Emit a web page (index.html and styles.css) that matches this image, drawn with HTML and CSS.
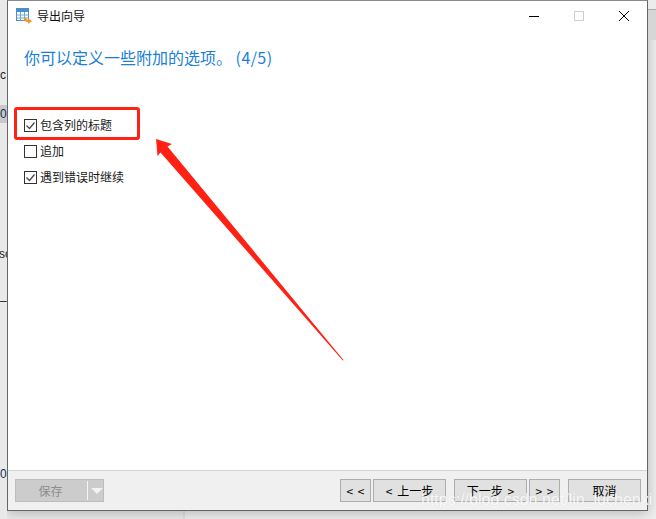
FILE: index.html
```html
<!DOCTYPE html>
<html lang="en">

<head>
    <meta charset="UTF-8" />
    <title>导出向导</title>
    <link rel="stylesheet" href="styles.css">
</head>

<body>
    <!-- Bits of the app behind the dialog -->
    <div class="behind-left">
        <span class="behind-text behind-c">c</span>
        <span class="behind-row">0</span>
        <span class="behind-text behind-sc">sc</span>
        <span class="behind-text behind-s">_s</span>
        <span class="behind-text behind-zero">0</span>
    </div>

    <div class="window">
        <div class="titlebar">
            <svg class="app-icon" width="16" height="16" viewBox="0 0 16 16">
                <rect x="0.5" y="0.5" width="12" height="12" fill="#fff" stroke="#4a8fc9" />
                <rect x="0" y="0" width="13" height="4" fill="#4a8fc9" />
                <path d="M4.500 4v8.500M8.500 4v8.500M0.500 7h12M0.500 10h12" stroke="#6fa6d6" fill="none" />
                <path d="M8.500 10c1 2.500 2.500 3.200 4.500 3" stroke="#f39a1f" stroke-width="2.200" fill="none" />
                <path d="M12 10l4 3.300-3.700 2.700z" fill="#f39a1f" />
            </svg>
            <span class="title-text">导出向导</span>
            <div class="window-controls">
                <svg width="10" height="10" viewBox="0 0 10 10">
                    <path d="M0 5.500h10" stroke="#000" fill="none" />
                </svg>
                <svg width="10" height="10" viewBox="0 0 10 10">
                    <rect x="0.500" y="0.500" width="9" height="9" stroke="#ccc" fill="none" />
                </svg>
                <svg width="10" height="10" viewBox="0 0 10 10">
                    <path d="M0 0l10 10M10 0L0 10" stroke="#000" fill="none" />
                </svg>
            </div>
        </div>

        <div class="content">
            <h2 class="heading">你可以定义一些附加的选项。 <span class="step">(4/5)</span></h2>
            <div class="options">
                <label class="option"><span class="box checked"><svg width="11" height="11" viewBox="0 0 11 11"><path d="M1.500 5.500l3 3 5-6" stroke="#444" stroke-width="1.200" fill="none" /></svg></span>包含列的标题</label>
                <label class="option"><span class="box"></span>追加</label>
                <label class="option"><span class="box checked"><svg width="11" height="11" viewBox="0 0 11 11"><path d="M1.500 5.500l3 3 5-6" stroke="#444" stroke-width="1.200" fill="none" /></svg></span>遇到错误时继续</label>
            </div>
        </div>

        <div class="footer">
            <div class="save-btn">
                <span class="save-label">保存</span>
                <span class="save-arrow"></span>
            </div>
            <div class="nav-buttons">
                <button class="btn btn-small">&lt; &lt;</button>
                <button class="btn">&lt; 上一步</button>
                <button class="btn btn-next">下一步 &gt;</button>
                <button class="btn btn-small">&gt; &gt;</button>
                <button class="btn btn-cancel">取消</button>
            </div>
        </div>
    </div>

    <div class="behind-right">
        <div class="behind-right-top"></div>
        <div class="behind-right-band"></div>
    </div>

    <!-- Annotations pasted on the screenshot -->
    <div class="mark-box"></div>
    <svg class="mark-arrow" width="656" height="519" viewBox="0 0 656 519">
        <path d="M156 139L172 144L167.500 146.500L343.500 360L342.800 360.500L160.500 152.500L157.500 156Z" fill="#ff2113" />
    </svg>
    <div class="watermark">https://blog.csdn.net/lin_luchenxi</div>
</body>

</html>
```

FILE: styles.css
```css
body {
    margin: 0;
    width: 656px;
    height: 519px;
    overflow: hidden;
    position: relative;
    display: flex;
    align-items: flex-start;
    background: linear-gradient(90deg, #ebebeb 0, #ebebeb 183px, #e0e0e0 183px, #e0e0e0 185px, #efefef 185px);
    font-family: "Noto Sans CJK SC", "Liberation Sans", sans-serif;
    font-size: 12px;
    color: #000;
}

.behind-left {
    width: 7px;
    height: 519px;
    flex-shrink: 0;
    position: relative;
    overflow: hidden;
    background: #e9e9e9;
}

.behind-text,
.behind-row {
    position: absolute;
    left: 0;
    font-family: "Liberation Sans", sans-serif;
    font-size: 12px;
    line-height: 14px;
    color: #222;
}

.behind-c {
    top: 68px;
}

.behind-row {
    top: 105px;
    width: 7px;
    height: 18px;
    line-height: 18px;
    background: #c9c9c9;
    color: #0b2f52;
}

.behind-sc {
    top: 247px;
    left: -1px;
}

.behind-s {
    top: 288px;
}

.behind-zero {
    top: 467px;
    color: #0b2f52;
}

.behind-right {
    width: 8px;
    flex-shrink: 0;
}

.behind-right-top {
    height: 9px;
    border-bottom: 1px solid #ababab;
    background: #ececec;
}

.behind-right-band {
    height: 30px;
    background: #d6d6d6;
}

.window {
    width: 641px;
    height: 511px;
    box-sizing: border-box;
    flex-shrink: 0;
    display: flex;
    flex-direction: column;
    background: #fff;
    border: 1px solid #666;
    border-top: 1px solid #8a8a8a;
    box-shadow: 0 2px 12px rgba(0, 0, 0, 0.25);
}

.titlebar {
    height: 29px;
    display: flex;
    align-items: center;
    padding: 0 0 0 8px;
    flex-shrink: 0;
}

.app-icon {
    margin-right: 5px;
}

.title-text {
    line-height: 16px;
    color: #111;
}

.window-controls {
    margin-left: auto;
    display: flex;
    gap: 35px;
    padding-right: 18px;
}

.content {
    flex: 1;
    padding: 0 16px;
}

.heading {
    margin: 0;
    padding-top: 16px;
    font-size: 16px;
    font-weight: normal;
    line-height: 22px;
    color: #1a7fd6;
}

.step {
    letter-spacing: 0.400px;
}

.options {
    margin-top: 48px;
    display: flex;
    flex-direction: column;
    gap: 8px;
}

.option {
    display: flex;
    align-items: center;
    height: 18px;
    line-height: 18px;
    color: #1a1a1a;
}

.box {
    width: 11px;
    height: 11px;
    margin-right: 3px;
    border: 1px solid #333;
    background: #fff;
    display: flex;
}

.footer {
    height: 40px;
    flex-shrink: 0;
    box-sizing: border-box;
    border-top: 1px solid #d3d3d3;
    background: #f0f0f0;
    padding: 8px 6px 0 7px;
    display: flex;
    justify-content: space-between;
    align-items: flex-start;
}

.save-btn {
    width: 89px;
    height: 23px;
    box-sizing: border-box;
    border: 1px solid #bdbdbd;
    background: #cccccc;
    display: flex;
    align-items: center;
}

.save-label {
    width: 72px;
    padding-right: 2px;
    box-sizing: border-box;
    text-align: center;
    color: #8c8c8c;
    border-right: 1px solid #f4f4f4;
    height: 19px;
    line-height: 19px;
}

.save-arrow {
    width: 0;
    height: 0;
    margin-left: 3px;
    border-left: 6px solid transparent;
    border-right: 6px solid transparent;
    border-top: 6px solid #f2f2f2;
}

.nav-buttons {
    display: flex;
}

.btn {
    width: 73px;
    height: 23px;
    box-sizing: border-box;
    padding: 0;
    margin-left: 2px;
    border: 1px solid #adadad;
    background: #e1e1e1;
    font-family: inherit;
    font-size: 12px;
    line-height: 19px;
    word-spacing: 2px;
    color: #000;
}

.btn-small {
    width: 31px;
}

.btn-next,
.btn-cancel {
    margin-left: 8px;
}

.mark-box {
    position: absolute;
    left: 14px;
    top: 107px;
    width: 120px;
    height: 27px;
    border: 3px solid #ff2113;
    border-radius: 3px;
}

.mark-arrow {
    position: absolute;
    left: 0;
    top: 0;
}

.watermark {
    position: absolute;
    left: 421px;
    top: 490px;
    font-family: "Liberation Sans", sans-serif;
    font-size: 16px;
    line-height: 20px;
    color: rgba(255, 255, 255, 0.85);
    text-shadow: 0 0 1px rgba(190, 190, 190, 0.5);
    white-space: nowrap;
}
```
